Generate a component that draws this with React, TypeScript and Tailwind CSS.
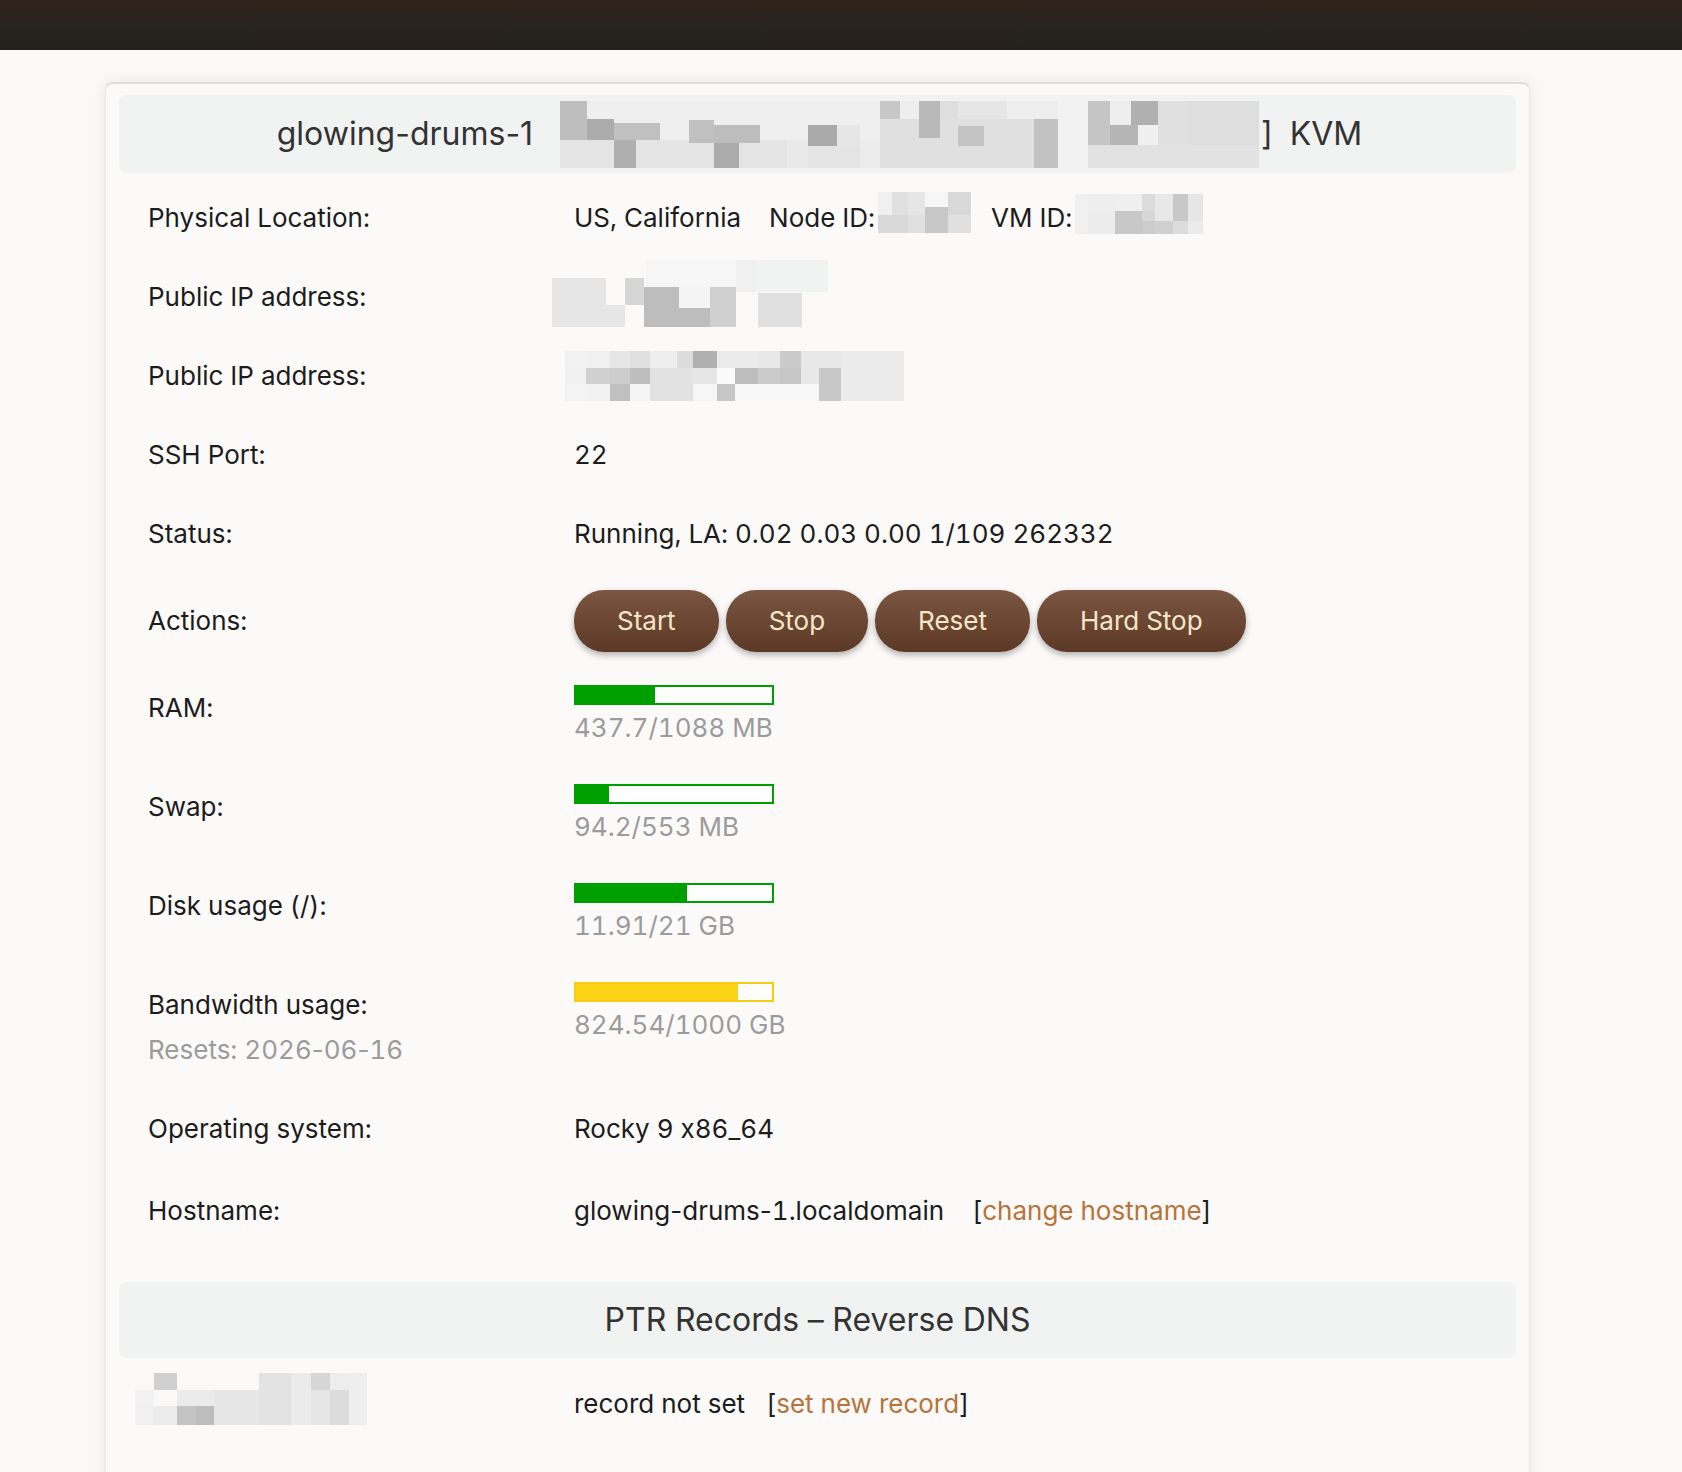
import React from "react";

type R = [number, number, number, number, string];

function grid(cols: number[], rows: number[], colors: string[][]): R[] {
  const out: R[] = [];
  for (let r = 0; r < rows.length - 1; r++) {
    for (let c = 0; c < cols.length - 1; c++) {
      out.push([cols[c], rows[r], cols[c + 1] - cols[c], rows[r + 1] - rows[r], "#" + colors[r][c]]);
    }
  }
  return out;
}

function Mosaic({ w, h, rects, className }: { w: number; h: number; rects: R[]; className?: string }) {
  return (
    <svg width={w} height={h} viewBox={`0 0 ${w} ${h}`} className={className} shapeRendering="crispEdges">
      {rects.map(([x, y, rw, rh, f], i) => (
        <rect key={i} x={x} y={y} width={rw} height={rh} fill={f} />
      ))}
    </svg>
  );
}

const titleRects: R[] = [
  [0, 0, 320, 39, "#efefef"],
  [0, 39, 320, 28, "#e4e4e4"],
  [0, 0, 27, 39, "#bebebe"],
  [27, 18, 27, 21, "#acacac"],
  [54, 22, 46, 17, "#c0c0c0"],
  [54, 39, 22, 28, "#afafaf"],
  [129, 19, 25, 23, "#c0c0c0"],
  [154, 24, 46, 18, "#bdbdbd"],
  [154, 42, 25, 25, "#acacac"],
  [227, 39, 21, 28, "#e9e9e9"],
  [248, 24, 29, 21, "#aaaaaa"],
  [277, 24, 23, 21, "#e6e6e6"],
  [300, 39, 20, 28, "#ececec"],
  // group 2
  [320, 0, 178, 18, "#eeeeee"],
  [320, 18, 178, 49, "#e0e0e0"],
  [320, 0, 20, 18, "#c7c7c7"],
  [359, 0, 21, 37, "#b9b9b9"],
  [380, 0, 18, 18, "#dedede"],
  [398, 0, 49, 18, "#e6e6e6"],
  [398, 25, 26, 20, "#c3c3c3"],
  [474, 18, 24, 49, "#c2c2c2"],
  [498, 0, 30, 67, "#f2f2f2"],
  // group 3
  [528, 0, 171, 44, "#dedede"],
  [528, 44, 171, 23, "#e2e2e2"],
  [528, 0, 22, 44, "#c5c5c5"],
  [550, 24, 28, 20, "#b5b5b5"],
  [571, 0, 27, 24, "#b0b0b0"],
  [578, 24, 20, 20, "#efefef"],
  [598, 0, 30, 44, "#e0e0e0"],
  [550, 0, 21, 24, "#eeeeee"],
];

const ip1Rects: R[] = [
  [94, 0, 90, 27, "#f6f6f6"],
  [184, 0, 20, 32, "#f0f0f0"],
  [204, 0, 72, 32, "#f1f2f2"],
  [0, 18, 54, 49, "#e6e6e6"],
  [54, 45, 19, 22, "#e6e6e6"],
  [73, 18, 19, 27, "#d6d6d6"],
  [92, 27, 35, 40, "#bdbdbd"],
  [127, 27, 31, 21, "#f4f4f4"],
  [127, 48, 31, 19, "#bdbdbd"],
  [158, 27, 26, 40, "#cfcfcf"],
  [206, 33, 44, 34, "#e0e0e0"],
];

const ip2Rects = grid(
  [0, 21, 45, 65, 85, 112, 128, 152, 170, 193, 215, 236, 254, 276, 339],
  [0, 17, 33, 50],
  [
    ["f2f2f2", "f0f0f0", "e6e6e6", "e0e0e0", "eeeeee", "dcdcdc", "b0b0b0", "ebebeb", "ebebeb", "e8e8e8", "cacaca", "e8e8e8", "e8e8e8", "ebebeb"],
    ["f0f0f0", "d0d0d0", "cccccc", "bebebe", "e2e2e2", "e2e2e2", "e6e6e6", "fafafa", "bdbdbd", "cbcbcb", "c6c6c6", "e8e8e8", "c8c8c8", "ebebeb"],
    ["f3f3f3", "f2f2f2", "c0c0c0", "f5f5f5", "e2e2e2", "e2e2e2", "f6f6f6", "c6c6c6", "f8f8f8", "f8f8f8", "f8f8f8", "f8f8f8", "c8c8c8", "ebebeb"],
  ]
);

const nodeRects = grid(
  [0, 14, 30, 47, 70, 93],
  [0, 15, 23, 41],
  [
    ["f0f0f0", "e0e0e0", "e6e6e6", "f6f6f6", "d8d8d8"],
    ["f0f0f0", "e0e0e0", "e6e6e6", "c8c8c8", "d8d8d8"],
    ["d8d8d8", "d8d8d8", "e0e0e0", "c8c8c8", "e0e0e0"],
  ]
);

const vmRects = grid(
  [0, 13, 40, 67, 80, 98, 113, 128],
  [0, 17, 27, 40],
  [
    ["f0f0f0", "eeeeee", "efefef", "dcdcdc", "e8e8e8", "c8c8c8", "e6e6e6"],
    ["f0f0f0", "ececec", "c8c8c8", "d8d8d8", "e8e8e8", "c8c8c8", "e6e6e6"],
    ["f0f0f0", "ececec", "c8c8c8", "cccccc", "d0d0d0", "dcdcdc", "ebebeb"],
  ]
);

const ptrRects = grid(
  [0, 19, 42, 61, 79, 124, 156, 176, 195, 214, 232],
  [0, 17, 33, 52],
  [
    ["faf9f7", "d0d0d0", "faf9f7", "faf9f7", "faf9f7", "e3e3e3", "ebebeb", "d6d6d6", "ededed", "eeeeee"],
    ["f2f2f2", "faf9f7", "ebebeb", "ebebeb", "e6e6e6", "e3e3e3", "ebebeb", "e6e6e6", "dcdcdc", "eeeeee"],
    ["f0f0f0", "ececec", "c4c4c4", "bdbdbd", "e6e6e6", "e3e3e3", "ebebeb", "e6e6e6", "dcdcdc", "eeeeee"],
  ]
);

function H() {
  return <span className="normal-nums">-</span>;
}

function Label({ children }: { children: React.ReactNode }) {
  return <div className="w-[426px] shrink-0 leading-[45px]">{children}</div>;
}

function TextRow({ label, children, h = "h-[79px]" }: { label: string; children: React.ReactNode; h?: string }) {
  return (
    <div className={`flex items-center ${h} pl-[29px]`}>
      <Label>{label}</Label>
      <div className="flex items-center leading-[45px]">{children}</div>
    </div>
  );
}

function Bar({ pct, color, border }: { pct: number; color: string; border: string }) {
  return (
    <div className={`h-[20px] w-[200px] border-2 bg-white ${border}`}>
      <div className={`h-full ${color}`} style={{ width: `${pct}%` }} />
    </div>
  );
}

function BarRow({
  label,
  sub,
  pct,
  value,
  yellow,
}: {
  label: string;
  sub?: React.ReactNode;
  pct: number;
  value: string;
  yellow?: boolean;
}) {
  return (
    <div className="flex items-start pl-[29px] pt-[17px] pb-[17px]">
      <div className="w-[426px] shrink-0 leading-[45px]">
        <div>{label}</div>
        {sub && <div className="text-[#9b9b9b]">{sub}</div>}
      </div>
      <div>
        <Bar
          pct={pct}
          color={yellow ? "bg-[#fdd116]" : "bg-[#009f00]"}
          border={yellow ? "border-[#f7cd12]" : "border-[#009f00]"}
        />
        <div className="leading-[45px] text-[#9b9b9b]">{value}</div>
      </div>
    </div>
  );
}

function Btn({ children }: { children: React.ReactNode }) {
  return (
    <button className="h-[62px] rounded-[30px] bg-linear-to-b from-[#7b5642] to-[#5c3926] px-[43px] text-[26px] leading-none text-[#f6e7c9] shadow-[0_3px_6px_rgba(0,0,0,0.3)]">
      {children}
    </button>
  );
}

export default function App() {
  return (
    <div className="h-screen overflow-hidden bg-[#faf9f7] font-['Inter',sans-serif] text-[26px] text-[#1c1c1c] tabular-nums [font-feature-settings:'calt'_0]">
      <div className="h-[50px] bg-linear-to-b from-[#2f241c] to-[#23211f]" />
      <div className="ml-[105px] mt-[32px] w-[1425px] rounded-lg border border-[#e6e6e5] border-t-2 border-t-[#dddddc] bg-[#fbfaf9] px-[13px] pt-[11px] pb-[200px] shadow-[0_0_14px_rgba(0,0,0,0.07)]">
        {/* title band */}
        <div className="flex h-[78px] items-center justify-center rounded-lg bg-[#f1f2f2] text-[32px] text-[#333333] normal-nums">
          <span className="ml-[4px]">glowing-drums-1</span>
          <Mosaic w={699} h={67} rects={titleRects} className="ml-[27px]" />
          <span className="ml-[2px]">]</span>
          <span className="ml-[17px]">KVM</span>
        </div>

        <div className="pt-[5px]">
          <TextRow label="Physical Location:">
            <span>US, California</span>
            <span className="ml-[28px]">Node ID:</span>
            <Mosaic w={93} h={41} rects={nodeRects} className="mb-[10px] ml-[3px]" />
            <span className="ml-[20px]">VM ID:</span>
            <Mosaic w={128} h={40} rects={vmRects} className="mb-[8px] ml-[3px]" />
          </TextRow>
          <TextRow label="Public IP address:">
            <Mosaic w={276} h={67} rects={ip1Rects} className="-ml-[22px] mb-[6px]" />
          </TextRow>
          <TextRow label="Public IP address:">
            <Mosaic w={339} h={50} rects={ip2Rects} className="-ml-[9px]" />
          </TextRow>
          <TextRow label="SSH Port:">
            <span>22</span>
          </TextRow>
          <TextRow label="Status:">
            <span>Running, LA: 0.02 0.03 0.00 1/109 262332</span>
          </TextRow>
          <div className="flex h-[95px] items-center pl-[29px]">
            <Label>Actions:</Label>
            <div className="flex gap-[7px]">
              <Btn>Start</Btn>
              <Btn>Stop</Btn>
              <Btn>Reset</Btn>
              <Btn>Hard Stop</Btn>
            </div>
          </div>
          <BarRow label="RAM:" pct={40.2} value="437.7/1088 MB" />
          <BarRow label="Swap:" pct={17} value="94.2/553 MB" />
          <BarRow label="Disk usage (/):" pct={56.7} value="11.91/21 GB" />
          <BarRow
            label="Bandwidth usage:"
            sub={
              <>
                Resets: 2026<H />06<H />16
              </>
            }
            pct={82.5}
            value="824.54/1000 GB"
            yellow
          />
          <TextRow label="Operating system:">
            <span>Rocky 9 x86_64</span>
          </TextRow>
          <TextRow label="Hostname:" h="h-[84px]">
            <span>
              glowing<H />drums<H />1.localdomain
            </span>
            <span className="ml-[28px]">[</span>
            <a className="text-[#b8733a]">change hostname</a>
            <span>]</span>
          </TextRow>
        </div>

        {/* PTR */}
        <div className="mt-[30px] flex h-[76px] items-center justify-center rounded-lg bg-[#f1f2f2] text-[32px] text-[#333333]">
          PTR Records – Reverse DNS
        </div>
        <div className="flex items-start pl-[16px] pt-[15px]">
          <div className="w-[439px] shrink-0">
            <Mosaic w={232} h={52} rects={ptrRects} />
          </div>
          <div className="flex pt-[8px] leading-[45px]">
            <span>record not set</span>
            <span className="ml-[21px]">[</span>
            <a className="text-[#b8733a]">set new record</a>
            <span>]</span>
          </div>
        </div>
      </div>
    </div>
  );
}
